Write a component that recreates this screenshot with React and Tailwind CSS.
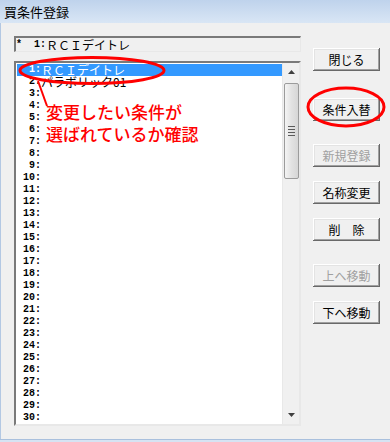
import React from 'react'

const names = { 1: 'ＲＣＩデイトレ', 2: 'パラボリック01' }
const rows = Array.from({ length: 30 }, (_, i) => ({ no: i + 1, name: names[i + 1] || '' }))

const jp = { fontFamily: '"Noto Sans CJK JP", "Liberation Sans", sans-serif' }
const mono = { fontFamily: '"Liberation Mono", "DejaVu Sans Mono", monospace' }

const Btn = ({ label, disabled, className = '' }) => (
    <div
        className={`w-[67px] h-[23px] flex items-center justify-center text-[12px] leading-none bg-[#f0f0f0] shadow-[inset_-1px_-1px_#696969,inset_1px_1px_#ffffff,inset_-2px_-2px_#a0a0a0,inset_2px_2px_#e3e3e3] whitespace-pre ${disabled ? 'text-[#a0a0a0]' : 'text-black'} ${className}`}
        style={jp}
    >
        {label}
    </div>
)

const ScrollBar = () => (
    <div className="w-[17px] h-full bg-[#f0f0f0] border-l border-[#e8e8e8] flex flex-col items-center">
        <div className="h-[18px] w-full flex items-center justify-center">
            <svg width="7" height="4" viewBox="0 0 7 4"><path d="M0 4 L3.5 0 L7 4 Z" fill="#404040" /></svg>
        </div>
        <div className="mt-[2px] w-[15px] h-[96px] rounded-[2px] border border-[#9b9b9b] bg-gradient-to-r from-[#f4f4f4] via-[#e2e2e2] to-[#d6d6d6] flex flex-col items-center justify-center gap-[2px]">
            <div className="w-[7px] h-px bg-[#5a5a5a]" />
            <div className="w-[7px] h-px bg-[#5a5a5a]" />
            <div className="w-[7px] h-px bg-[#5a5a5a]" />
            <div className="w-[7px] h-px bg-[#5a5a5a]" />
        </div>
        <div className="flex-1" />
        <div className="h-[18px] w-full flex items-center justify-center">
            <svg width="7" height="4" viewBox="0 0 7 4"><path d="M0 0 L3.5 4 L7 0 Z" fill="#404040" /></svg>
        </div>
    </div>
)

export default function App() {
    return (
        <div className="relative w-[390px] h-[442px] overflow-hidden bg-[#f0f0f0] flex flex-col">
            <div className="h-[23px] shrink-0 bg-gradient-to-b from-[#bfd3ec] to-[#d9e6f5] flex items-center pl-[4px]">
                <span className="text-[13px] text-black leading-none" style={jp}>買条件登録</span>
            </div>

            <div className="flex-1 flex border-l border-[#b3c8e3]">
                <div className="pl-[13px] pt-[13px] flex flex-col">
                    <div className="w-[287px] h-[16px] border-t-2 border-l-2 border-t-[#7a7a7a] border-l-[#7a7a7a] border-b border-r border-b-[#e8e8e8] border-r-[#e8e8e8] flex items-center bg-[#f0f0f0]">
                        <span className="w-[30px] text-[10px] font-bold whitespace-pre leading-none text-black" style={mono}>*  1:</span>
                        <span className="text-[12px] leading-none text-black" style={jp}>ＲＣＩデイトレ</span>
                    </div>

                    <div className="mt-[9px] w-[287px] h-[365px] border-t-2 border-l-2 border-t-[#7a7a7a] border-l-[#7a7a7a] border-b-2 border-r-2 border-b-[#e8e8e8] border-r-[#e8e8e8] bg-white flex">
                        <div className="flex-1 pt-px">
                            {rows.map((r) => (
                                <div
                                    key={r.no}
                                    className={`ml-px h-[12px] flex items-center ${r.no === 1 ? 'bg-[#3399ff] text-white' : 'text-black'}`}
                                >
                                    <span className="w-[24px] text-right text-[10px] font-bold leading-none scale-y-[1.15]" style={mono}>{r.no}:</span>
                                    <span className="text-[12px] leading-none" style={jp}>{r.name}</span>
                                </div>
                            ))}
                        </div>
                        <ScrollBar />
                    </div>
                </div>

                <div className="ml-[12px] pt-[25px] flex flex-col">
                    <Btn label="閉じる" />
                    <Btn label="条件入替" className="mt-[27px]" />
                    <Btn label="新規登録" disabled className="mt-[23px]" />
                    <Btn label="名称変更" className="mt-[14px]" />
                    <Btn label="削　除" className="mt-[14px]" />
                    <Btn label="上へ移動" disabled className="mt-[23px]" />
                    <Btn label="下へ移動" className="mt-[14px]" />
                </div>
            </div>

            <div className="h-[3px] shrink-0 border-t border-[#a9c0dd] bg-[#d6e3f3]" />

            <svg className="absolute inset-0 pointer-events-none" width="390" height="442">
                <ellipse cx="92" cy="70.5" rx="72" ry="13" fill="none" stroke="#ff0000" strokeWidth="3" />
                <line x1="38" y1="81" x2="47" y2="106" stroke="#ff0000" strokeWidth="2" />
                <ellipse cx="346" cy="107" rx="38" ry="19" fill="none" stroke="#ff0000" strokeWidth="3" />
            </svg>
            <div className="absolute left-[46px] top-[101px] text-[17px] leading-[22px] text-[#ff0000] font-medium" style={jp}>
                <div>変更したい条件が</div>
                <div>選ばれているか確認</div>
            </div>
        </div>
    )
}
